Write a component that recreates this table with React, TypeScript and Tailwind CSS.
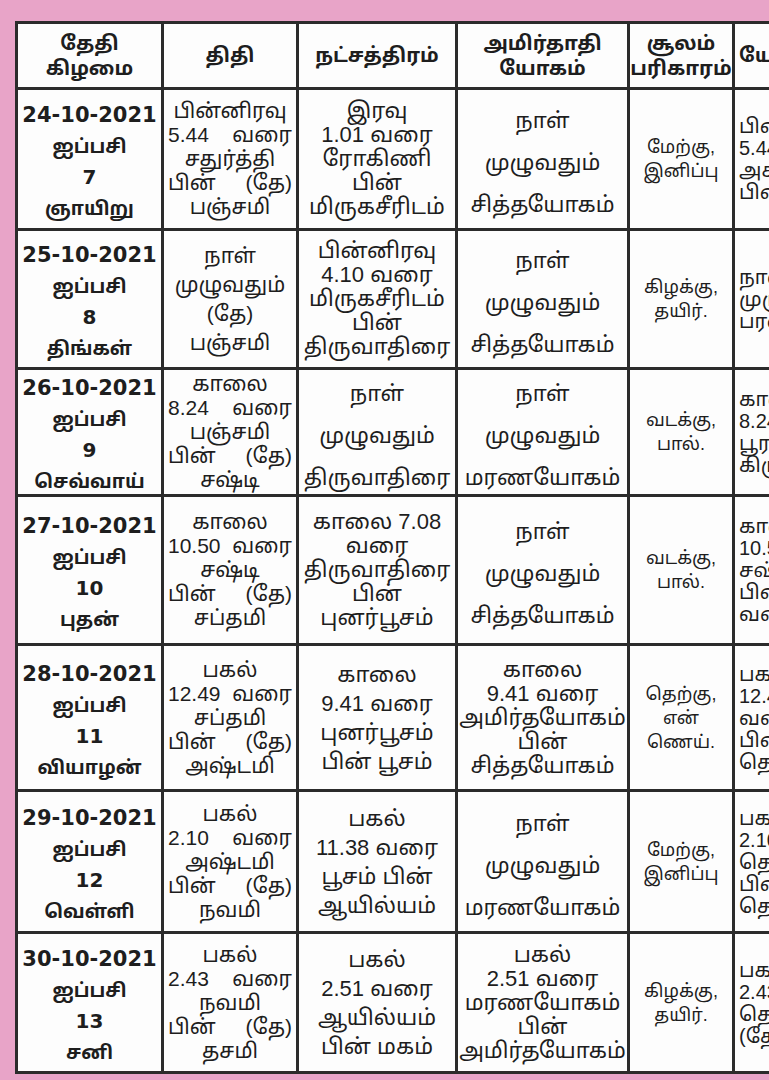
import React from 'react';

type Row = {
    h: number;
    date: string[];
    thithi: string[];
    star: string[];
    yogam: string[];
    soolam: string[];
    extra: string[];
};

const rows: Row[] = [
    {
        h: 141,
        date: ['24-10-2021', 'ஐப்பசி', '7', 'ஞாயிறு'],
        thithi: ['பின்னிரவு', '5.44 வரை', 'சதுர்த்தி', 'பின் (தே)', 'பஞ்சமி'],
        star: ['இரவு', '1.01 வரை', 'ரோகிணி', 'பின்', 'மிருகசீரிடம்'],
        yogam: ['நாள்', 'முழுவதும்', 'சித்தயோகம்'],
        soolam: ['மேற்கு,', 'இனிப்பு'],
        extra: ['பின்னிரவு', '5.44 வரை', 'அசுவினி', 'பின்'],
    },
    {
        h: 139,
        date: ['25-10-2021', 'ஐப்பசி', '8', 'திங்கள்'],
        thithi: ['நாள்', 'முழுவதும்', '(தே)', 'பஞ்சமி'],
        star: ['பின்னிரவு', '4.10 வரை', 'மிருகசீரிடம்', 'பின்', 'திருவாதிரை'],
        yogam: ['நாள்', 'முழுவதும்', 'சித்தயோகம்'],
        soolam: ['கிழக்கு,', 'தயிர்.'],
        extra: ['நாள்', 'முழுவதும்', 'பரணி'],
    },
    {
        h: 127,
        date: ['26-10-2021', 'ஐப்பசி', '9', 'செவ்வாய்'],
        thithi: ['காலை', '8.24 வரை', 'பஞ்சமி', 'பின் (தே)', 'சஷ்டி'],
        star: ['நாள்', 'முழுவதும்', 'திருவாதிரை'],
        yogam: ['நாள்', 'முழுவதும்', 'மரணயோகம்'],
        soolam: ['வடக்கு,', 'பால்.'],
        extra: ['காலை', '8.24 வரை', 'பூரட்டாதி', 'கிருத்திகை'],
    },
    {
        h: 149,
        date: ['27-10-2021', 'ஐப்பசி', '10', 'புதன்'],
        thithi: ['காலை', '10.50 வரை', 'சஷ்டி', 'பின் (தே)', 'சப்தமி'],
        star: ['காலை 7.08', 'வரை', 'திருவாதிரை', 'பின்', 'புனர்பூசம்'],
        yogam: ['நாள்', 'முழுவதும்', 'சித்தயோகம்'],
        soolam: ['வடக்கு,', 'பால்.'],
        extra: ['காலை', '10.50 வரை', 'சஷ்டி', 'பின்', 'வரை'],
    },
    {
        h: 146,
        date: ['28-10-2021', 'ஐப்பசி', '11', 'வியாழன்'],
        thithi: ['பகல்', '12.49 வரை', 'சப்தமி', 'பின் (தே)', 'அஷ்டமி'],
        star: ['காலை', '9.41 வரை', 'புனர்பூசம்', 'பின் பூசம்'],
        yogam: ['காலை', '9.41 வரை', 'அமிர்தயோகம்', 'பின்', 'சித்தயோகம்'],
        soolam: ['தெற்கு,', 'என்', 'ணெய்.'],
        extra: ['பகல்', '12.49 வரை', 'வளர்', 'பின்', 'தெய்வம்'],
    },
    {
        h: 142,
        date: ['29-10-2021', 'ஐப்பசி', '12', 'வெள்ளி'],
        thithi: ['பகல்', '2.10 வரை', 'அஷ்டமி', 'பின் (தே)', 'நவமி'],
        star: ['பகல்', '11.38 வரை', 'பூசம் பின்', 'ஆயில்யம்'],
        yogam: ['நாள்', 'முழுவதும்', 'மரணயோகம்'],
        soolam: ['மேற்கு,', 'இனிப்பு'],
        extra: ['பகல்', '2.10 வரை', 'தெய்வம்', 'பின்', 'தெய்வம்'],
    },
    {
        h: 140,
        date: ['30-10-2021', 'ஐப்பசி', '13', 'சனி'],
        thithi: ['பகல்', '2.43 வரை', 'நவமி', 'பின் (தே)', 'தசமி'],
        star: ['பகல்', '2.51 வரை', 'ஆயில்யம்', 'பின் மகம்'],
        yogam: ['பகல்', '2.51 வரை', 'மரணயோகம்', 'பின்', 'அமிர்தயோகம்'],
        soolam: ['கிழக்கு,', 'தயிர்.'],
        extra: ['பகல்', '2.43 வரை', 'தெய்வம்', '(தே)'],
    },
];

const leadFor = (n: number) =>
    n <= 3 ? 'leading-[42px] pt-[8px]' : n === 4 ? 'leading-[29px]' : 'leading-[24px]';

type LinesProps = { lines: string[]; h: number; className?: string; spread?: boolean };
function Lines({ lines, h, className, spread }: LinesProps) {
    return (
        <div
            className={`flex flex-col items-center justify-center ${leadFor(lines.length)} ${className ?? ''}`}
            style={{ height: h - 3 }}>
            {lines.map((l, i) =>
                spread && l.includes(' ') ? (
                    <span key={i} className="flex w-full justify-between whitespace-nowrap px-[4px]">
                        {l.split(' ').map((w) => (
                            <span key={w}>{w}</span>
                        ))}
                    </span>
                ) : (
                    <span key={i} className="whitespace-nowrap">
                        {l}
                    </span>
                ),
            )}
        </div>
    );
}

const td = 'border-[3px] border-[#2b2b2b] bg-[#fdfdfd] p-0 align-middle text-center overflow-hidden';
const th = 'border-[3px] border-[#2b2b2b] bg-[#fdfdfd] p-0 align-middle text-center font-bold text-[20px] leading-[25px]';

export default function App() {
    return (
        <div
            className="h-[1080px] w-[769px] overflow-hidden bg-[#e8a4c8] pl-[15px] pt-[21px] text-[#1e1e1e]"
            style={{ fontFamily: '"Liberation Sans", "Noto Sans Tamil", "Lohit Tamil", "Noto Sans", sans-serif' }}>
            <table className="w-[900px] table-fixed border-collapse">
                <colgroup>
                    <col className="w-[146px]" />
                    <col className="w-[135px]" />
                    <col className="w-[159px]" />
                    <col className="w-[172px]" />
                    <col className="w-[105px]" />
                    <col className="w-[183px]" />
                </colgroup>
                <thead>
                    <tr className="h-[66px]">
                        <th className={th}>
                            தேதி
                            <br />
                            கிழமை
                        </th>
                        <th className={th}>திதி</th>
                        <th className={th}>நட்சத்திரம்</th>
                        <th className={th}>
                            அமிர்தாதி
                            <br />
                            யோகம்
                        </th>
                        <th className={`${th} text-[18px] leading-[22px]`}>
                            சூலம்
                            <br />
                            பரிகாரம்
                        </th>
                        <th className={`${th} pl-[4px] text-left`}>யோகம்</th>
                    </tr>
                </thead>
                <tbody>
                    {rows.map((r) => (
                        <tr key={r.date[0]}>
                            <td className={td}>
                                <div
                                    className="flex flex-col items-center justify-center pt-[6px] font-bold leading-[31px]"
                                    style={{ height: r.h - 3 }}>
                                    {r.date.map((l, i) => (
                                        <span
                                            key={i}
                                            className={
                                                i === 0
                                                    ? 'font-["DejaVu_Sans"] text-[21px]'
                                                    : i === 2
                                                      ? 'font-["DejaVu_Sans"] text-[20px]'
                                                      : 'text-[19px]'
                                            }>
                                            {l}
                                        </span>
                                    ))}
                                </div>
                            </td>
                            <td className={td}>
                                <Lines lines={r.thithi} h={r.h} spread className="text-[21px]" />
                            </td>
                            <td className={td}>
                                <Lines lines={r.star} h={r.h} className="text-[22px]" />
                            </td>
                            <td className={td}>
                                <Lines lines={r.yogam} h={r.h} className="text-[22px]" />
                            </td>
                            <td className={td}>
                                <Lines lines={r.soolam} h={r.h} className="text-[18px] !leading-[24px] !pt-0" />
                            </td>
                            <td className={`${td} text-left`}>
                                <div
                                    className="flex flex-col items-start justify-center pl-[4px] text-[20px] leading-[22px]"
                                    style={{ height: r.h - 3 }}>
                                    {r.extra.map((l, i) => (
                                        <span key={i} className="whitespace-nowrap">
                                            {l}
                                        </span>
                                    ))}
                                </div>
                            </td>
                        </tr>
                    ))}
                </tbody>
            </table>
        </div>
    );
}
